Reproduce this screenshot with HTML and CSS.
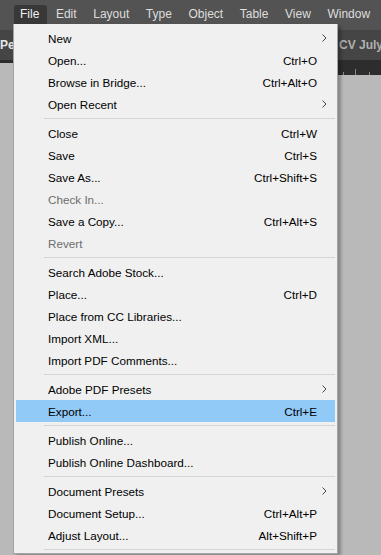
FILE: index.html
```html
<!DOCTYPE html>
<html>
<head>
<meta charset="utf-8">
<link rel="stylesheet" href="styles.css">
</head>
<body>
<div class="app">
  <nav class="menubar">
    <span class="mb-item active">File</span>
    <span class="mb-item">Edit</span>
    <span class="mb-item">Layout</span>
    <span class="mb-item">Type</span>
    <span class="mb-item">Object</span>
    <span class="mb-item">Table</span>
    <span class="mb-item">View</span>
    <span class="mb-item">Window</span>
  </nav>
  <div class="tabbar">
    <span class="tab tab-left">Pe</span>
    <span class="tab tab-right">CV July'2019.indd</span>
  </div>
  <div class="ruler">
    <div class="ruler-corner"></div>
    <div class="ruler-track">
      <svg class="ticks" width="48" height="15" viewBox="0 0 48 15">
        <line x1="10.5" y1="12" x2="10.5" y2="15" stroke="#8a8a8a" stroke-width="1"/>
        <line x1="22.5" y1="9" x2="22.5" y2="15" stroke="#8a8a8a" stroke-width="1"/>
        <line x1="36.5" y1="12" x2="36.5" y2="15" stroke="#8a8a8a" stroke-width="1"/>
      </svg>
    </div>
  </div>
  <div class="canvas"></div>

  <div class="menu">
    <div class="row"><span class="label">New</span><svg class="arrow" width="5" height="8" viewBox="0 0 5 8"><polyline points="0.5,0.5 4,4 0.5,7.5" fill="none" stroke="#444" stroke-width="1"/></svg></div>
    <div class="row"><span class="label">Open...</span><span class="key">Ctrl+O</span></div>
    <div class="row"><span class="label">Browse in Bridge...</span><span class="key">Ctrl+Alt+O</span></div>
    <div class="row"><span class="label">Open Recent</span><svg class="arrow" width="5" height="8" viewBox="0 0 5 8"><polyline points="0.5,0.5 4,4 0.5,7.5" fill="none" stroke="#444" stroke-width="1"/></svg></div>
    <div class="sep"></div>
    <div class="row"><span class="label">Close</span><span class="key">Ctrl+W</span></div>
    <div class="row"><span class="label">Save</span><span class="key">Ctrl+S</span></div>
    <div class="row"><span class="label">Save As...</span><span class="key">Ctrl+Shift+S</span></div>
    <div class="row disabled"><span class="label">Check In...</span></div>
    <div class="row"><span class="label">Save a Copy...</span><span class="key">Ctrl+Alt+S</span></div>
    <div class="row disabled"><span class="label">Revert</span></div>
    <div class="sep"></div>
    <div class="row"><span class="label">Search Adobe Stock...</span></div>
    <div class="row"><span class="label">Place...</span><span class="key">Ctrl+D</span></div>
    <div class="row"><span class="label">Place from CC Libraries...</span></div>
    <div class="row"><span class="label">Import XML...</span></div>
    <div class="row"><span class="label">Import PDF Comments...</span></div>
    <div class="sep"></div>
    <div class="row"><span class="label">Adobe PDF Presets</span><svg class="arrow" width="5" height="8" viewBox="0 0 5 8"><polyline points="0.5,0.5 4,4 0.5,7.5" fill="none" stroke="#444" stroke-width="1"/></svg></div>
    <div class="row hover"><span class="label">Export...</span><span class="key">Ctrl+E</span></div>
    <div class="sep"></div>
    <div class="row"><span class="label">Publish Online...</span></div>
    <div class="row"><span class="label">Publish Online Dashboard...</span></div>
    <div class="sep"></div>
    <div class="row"><span class="label">Document Presets</span><svg class="arrow" width="5" height="8" viewBox="0 0 5 8"><polyline points="0.5,0.5 4,4 0.5,7.5" fill="none" stroke="#444" stroke-width="1"/></svg></div>
    <div class="row"><span class="label">Document Setup...</span><span class="key">Ctrl+Alt+P</span></div>
    <div class="row"><span class="label">Adjust Layout...</span><span class="key">Alt+Shift+P</span></div>
    <div class="sep"></div>
  </div>
</div>
</body>
</html>
```
FILE: styles.css
```css
html, body {
  margin: 0;
  padding: 0;
  width: 381px;
  height: 555px;
  overflow: hidden;
  background: #b9b9b9;
}
.app {
  position: relative;
  width: 381px;
  height: 555px;
  overflow: hidden;
  font-family: "Liberation Sans", Arial, sans-serif;
}
.menubar {
  height: 30px;
  background: #535353;
  display: flex;
  align-items: flex-start;
  padding-left: 14px;
  gap: 2.6px;
  box-sizing: border-box;
}
.mb-item {
  margin-top: 5px;
  height: 19px;
  line-height: 19px;
  padding: 0 8px 0 6px;
  font-size: 12px;
  color: #dedede;
  border-radius: 3px 3px 0 0;
  white-space: nowrap;
}
.mb-item.active {
  background: #383838;
  color: #f0f0f0;
}
.tabbar {
  height: 30px;
  background: #454545;
  display: flex;
  align-items: center;
  overflow: hidden;
  white-space: nowrap;
}
.tab {
  font-size: 12px;
  font-weight: bold;
  flex-shrink: 0;
}
.tab-left {
  width: 339px;
  color: #e6e6e6;
}
.tab-right {
  color: #b0b0b0;
}
.ruler {
  display: flex;
  height: 15px;
}
.ruler-corner {
  width: 13px;
  border-top: 3px solid #2d2d2d;
  background: #b9b9b9;
}
.ruler-track {
  flex: 1;
  background: #2d2d2d;
  display: flex;
  justify-content: flex-end;
}
.ticks {
  display: block;
}
.canvas {
  height: 480px;
  background: #b9b9b9;
}
.menu {
  position: absolute;
  left: 13px;
  top: 24px;
  width: 325px;
  box-sizing: border-box;
  background: #f0f0f0;
  border: 1px solid #a3a3a3;
  border-top: none;
  padding: 3px 2px 0 2px;
  box-shadow: 3px 2px 3px rgba(0, 0, 0, 0.28);
  font-family: "Liberation Sans", Arial, sans-serif;
  font-size: 11.7px;
  color: #000;
}
.row {
  display: flex;
  align-items: center;
  height: 22px;
  padding: 0 9px 0 32px;
}
.row .label {
  flex: 1;
  white-space: nowrap;
}
.row .key {
  margin-right: 9px;
  white-space: nowrap;
}
.row .arrow {
  display: block;
  margin-right: -1px;
}
.row.disabled {
  color: #6d6d6d;
}
.row.hover {
  background: #91c9f7;
}
.sep {
  height: 1px;
  background: #d5d5d5;
  margin: 3px 0 3px 28px;
}
```
